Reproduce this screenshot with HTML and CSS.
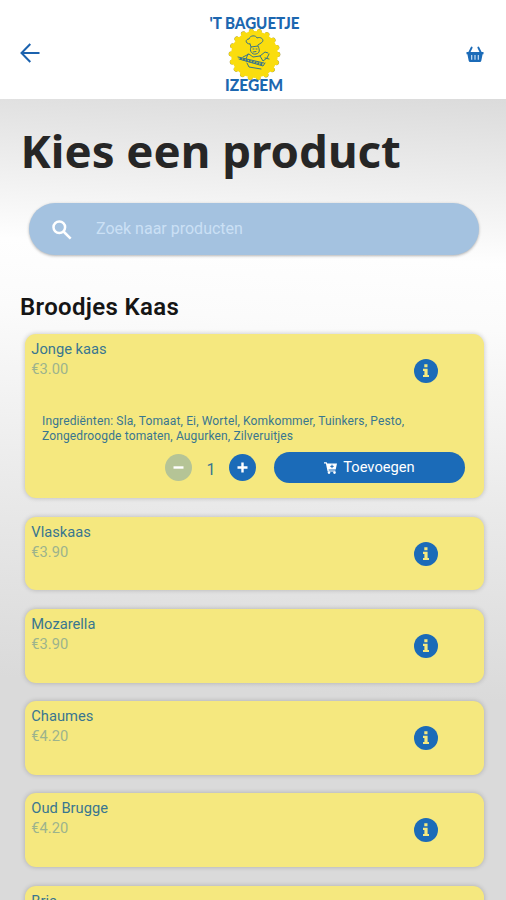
FILE: index.html
```html
<!DOCTYPE html>
<html lang="nl">
<head>
<meta charset="utf-8">
<title>'t Baguetje Izegem</title>
<link rel="stylesheet" href="styles.css">
</head>
<body>
<svg width="0" height="0" class="defs">
  <symbol id="info" viewBox="0 0 24 24">
    <circle cx="12" cy="12" r="12" fill="#1b6bb8"/>
    <path d="M10.3 5.2h3.2v3.1h-3.2zM9 9.7h4.6v6.2H15v2.2H9v-2.2h1.4v-4H9z" fill="#f5e87f"/>
  </symbol>
</svg>
<header class="topbar">
  <button class="back" aria-label="Terug">
    <svg width="20" height="20" viewBox="0 0 20 20" fill="none" stroke="#1b62ae" stroke-width="2"><path d="M10.3 1 1.5 10l8.8 9M1.8 10H19.5"/></svg>
  </button>
  <svg class="logo" width="100" height="84" viewBox="0 0 100 84">
    <text x="5.5" y="17.3" textLength="90" lengthAdjust="spacingAndGlyphs" class="brand">'T BAGUETJE</text>
    <circle cx="50.5" cy="42.5" r="23.6" fill="none" stroke="#a59c50" stroke-width="4.8" stroke-linecap="round" stroke-dasharray=".1 8.138"/>
    <circle cx="50.5" cy="42.5" r="23.2" fill="none" stroke="#fadd0e" stroke-width="4.8" stroke-linecap="round" stroke-dasharray=".1 8"/>
    <circle cx="50.5" cy="42.5" r="23.4" fill="#fadd0e"/>
    <g fill="none" stroke="#38758a" stroke-width="1" stroke-linecap="round">
      <path d="M46 32c-5 0-5-5-1-5 1-4 7-4 8-1 5-2 8 3 4 5l-3 2M46 32l1 3 7-1M47 35c-2 4 1 8 5 7s4-4 2-8M49 37h1m2 0h1m-4 3 3-.5"/>
      <path d="M39 45l6-3 4 3 7-1 5-4 3 1M34 45l26 6M35 47l24 7 2-3M44 42l-2 5m14-3 3 5 4-3 2-4m-4 4 4 1M43 51l2 4 12 2"/>
    </g>
    <path d="M36 46.5l23 6" fill="none" stroke="#38758a" stroke-width="2.3" stroke-dasharray="2 1"/>
    <text x="21" y="79" textLength="58" lengthAdjust="spacingAndGlyphs" class="brand">IZEGEM</text>
  </svg>
  <button class="basket" aria-label="Winkelmand">
    <svg width="18" height="17" viewBox="0 0 18 17">
      <path d="M5.7 1.5 3.2 6.5M12.3 1.5l2.5 5" stroke="#1b6bb8" stroke-width="1.8" stroke-linecap="round"/>
      <path d="M.5 6h17v2.3h-.9l-1.3 6.5q-.3 1.2-1.4 1.2H4.1q-1.1 0-1.4-1.2L1.4 8.3H.5z" fill="#1b6bb8"/>
      <path d="M5.7 9v4.7M9 9v4.7M12.3 9v4.7" stroke="#d5e7f7" stroke-width="1.1"/>
    </svg>
  </button>
</header>
<main>
  <h1>Kies een product</h1>
  <label class="search">
    <svg width="20" height="20" viewBox="0 0 20 20" fill="none" stroke="#fff" stroke-width="2.5"><circle cx="7.3" cy="7.3" r="5.8"/><path d="m11.5 11.5 7.2 7.2"/></svg>
    <span>Zoek naar producten</span>
  </label>
  <h2>Broodjes Kaas</h2>
  <section class="list">
    <article class="card open">
      <div class="row"><div><h3>Jonge kaas</h3><p class="price">€3.00</p></div><svg class="info"><use href="#info"/></svg></div>
      <p class="ingredients">Ingrediënten: Sla, Tomaat, Ei, Wortel, Komkommer, Tuinkers, Pesto,<br>Zongedroogde tomaten, Augurken, Zilveruitjes</p>
      <div class="order">
        <button class="round minus" aria-label="Minder"><svg width="11" height="11" viewBox="0 0 11 11"><path d="M.5 5.5h10" stroke="#fff" stroke-width="2.4"/></svg></button>
        <span class="count">1</span>
        <button class="round" aria-label="Meer"><svg width="11" height="11" viewBox="0 0 11 11"><path d="M.5 5.5h10M5.5.5v10" stroke="#fff" stroke-width="2.4"/></svg></button>
        <button class="add"><svg width="13" height="12" viewBox="0 0 13 12"><path d="M0 .2h2.7l.5 1.4H13l-1.3 5.8H4.6l.2 1h6.6v1.2H3.6L1.9 1.5H0z" fill="#fff"/><circle cx="5" cy="10.6" r="1.3" fill="#fff"/><circle cx="10.5" cy="10.6" r="1.3" fill="#fff"/><path d="M8 2.7v3.4M6.3 4.4h3.4" stroke="#1b6bb8"/></svg><span>Toevoegen</span></button>
      </div>
    </article>
    <article class="card"><div class="row"><div><h3>Vlaskaas</h3><p class="price">€3.90</p></div><svg class="info"><use href="#info"/></svg></div></article>
    <article class="card"><div class="row"><div><h3>Mozarella</h3><p class="price">€3.90</p></div><svg class="info"><use href="#info"/></svg></div></article>
    <article class="card"><div class="row"><div><h3>Chaumes</h3><p class="price">€4.20</p></div><svg class="info"><use href="#info"/></svg></div></article>
    <article class="card"><div class="row"><div><h3>Oud Brugge</h3><p class="price">€4.20</p></div><svg class="info"><use href="#info"/></svg></div></article>
    <article class="card"><div class="row"><div><h3>Brie</h3></div></div></article>
  </section>
</main>
</body>
</html>
```
FILE: styles.css
```css
* { box-sizing: border-box; margin: 0; padding: 0; }
body { width: 506px; height: 900px; overflow: hidden; display: flex; flex-direction: column; background: #fff; font-family: Roboto, "Liberation Sans", sans-serif; }
button { border: 0; background: none; font: inherit; }
svg { display: block; }
.defs { position: absolute; }
.topbar { height: 99px; flex: none; display: flex; justify-content: space-between; align-items: center; padding: 10px 22px 0 20px; background: #fff; }
.back { width: 20px; margin-bottom: 4px; }
.logo { margin: -2px 0 0 1px; overflow: visible; }
.basket { width: 18px; }
.brand { font: 900 16.5px Lato, sans-serif; fill: #1c67b0; }
main { flex: 1; min-height: 0; overflow: hidden; padding: 0 22.5px 0 25px; background: linear-gradient(183deg, #dbdbdb 0, #f0f0f0 12%, #fefefe 20%, #fbfbfb 28%, #e9e9e9 51%, #dadada 73%, #dadada 100%); }
h1 { margin: 19px 0 0 -4.5px; font: 700 45.6px/64px "Noto Sans", sans-serif; color: #262626; white-space: nowrap; }
.search { display: flex; align-items: center; height: 52px; width: 450px; margin: 21px 0 0 4px; padding-left: 23px; gap: 24px; border-radius: 26px; background: #a4c2e0; box-shadow: 0 1px 3px rgba(0,0,0,.3); color: #cbe0f5; font-size: 16px; }
.search svg { margin-top: 1px; }
.search span { margin-top: -2px; }
h2 { margin: 36px 0 0 -5px; font-size: 24px; font-weight: 600; letter-spacing: .33px; line-height: 32px; color: #151515; }
.list { display: flex; flex-direction: column; gap: 18.5px; margin-top: 10.5px; }
.card { flex: none; height: 73.8px; padding: 5px 0 0 6.3px; border-radius: 11px; background: #f5e87f; box-shadow: 0 0 5px rgba(0,0,0,.22); color: #397690; }
.card.open { height: 164.5px; }
.row { display: flex; justify-content: space-between; padding-right: 45.5px; }
.info { width: 24px; height: 24px; margin-top: 20px; }
h3 { font-size: 14.7px; font-weight: 400; line-height: 20px; }
.price { font-size: 14.7px; line-height: 20px; color: #9cb38d; }
.ingredients { margin: 31.5px 0 0 10.7px; font-size: 12px; letter-spacing: .14px; line-height: 14.5px; }
.order { display: flex; align-items: center; margin: 9px 0 0 134.2px; }
.round { display: grid; place-items: center; width: 27px; height: 27px; border-radius: 50%; background: #1b6bb8; }
.minus { background: #b5c496; }
.count { width: 37px; text-align: center; font-size: 16px; padding-top: 4px; }
.add { display: flex; align-items: center; justify-content: center; gap: 6px; width: 191px; height: 31px; margin-left: 18px; padding-right: 1px; border-radius: 16px; background: #1b6bb8; color: #fff; font-size: 14.7px; }
.add span { margin-top: -1px; }
```
